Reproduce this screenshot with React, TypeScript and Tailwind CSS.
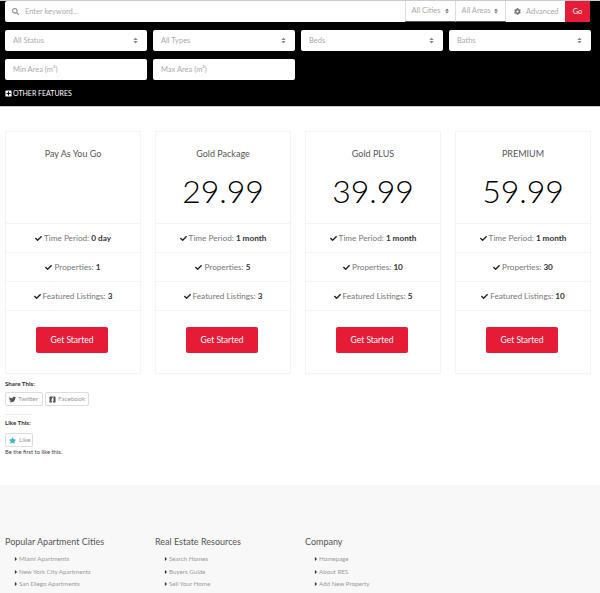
import { FaTwitter, FaFacebookSquare, FaStar, FaCaretRight, FaCheck, FaPlusSquare, FaCog, FaSearch, FaSort } from 'react-icons/fa';

interface Plan {
  name: string;
  price?: string;
  period: string;
  properties: string;
  featured: string;
}

const plans: Plan[] = [
  { name: 'Pay As You Go', period: '0 day', properties: '1', featured: '3' },
  { name: 'Gold Package', price: '29.99', period: '1 month', properties: '5', featured: '3' },
  { name: 'Gold PLUS', price: '39.99', period: '1 month', properties: '10', featured: '5' },
  { name: 'PREMIUM', price: '59.99', period: '1 month', properties: '30', featured: '10' },
];

const footerColumns = [
  { title: 'Popular Apartment Cities', links: ['Miami Apartments', 'New York City Apartments', 'San Diego Apartments'] },
  { title: 'Real Estate Resources', links: ['Search Homes', 'Buyers Guide', 'Sell Your Home'] },
  { title: 'Company', links: ['Homepage', 'About RES', 'Add New Property'] },
];

function SelectBox({ label, arrows = true }: { label: string; arrows?: boolean }) {
  return (
    <div className="flex h-[21px] items-center justify-between rounded-[2px] bg-white px-2 text-[7.5px] text-[#aaa]">
      <span>{label}</span>
      {arrows && <FaSort className="text-[7px] text-[#888]" />}
    </div>
  );
}

function PlanRow({ label, value }: { label: string; value: string }) {
  return (
    <div className="flex h-[29px] items-center justify-center gap-[2px] border-t border-[#f4f4f4] text-[8.2px] text-[#777]">
      <FaCheck className="text-[7px] text-[#222]" />
      <span>
        {label}: <b className="font-bold text-[#333]">{value}</b>
      </span>
    </div>
  );
}

function PlanCard({ plan }: { plan: Plan }) {
  return (
    <div className="flex h-[243px] w-[136px] flex-col border border-[#f4f4f4] bg-white">
      <div className="flex h-[91px] flex-col items-center">
        <div className="mt-[16px] text-[9px] leading-[12px] text-[#555]">{plan.name}</div>
        {plan.price && <div className="mt-[11px] text-[32px] font-light leading-[40px] text-black">{plan.price}</div>}
      </div>
      <PlanRow label="Time Period" value={plan.period} />
      <PlanRow label="Properties" value={plan.properties} />
      <PlanRow label="Featured Listings" value={plan.featured} />
      <div className="flex flex-1 justify-center border-t border-[#f4f4f4] pr-[2px] pt-[16px]">
        <div className="flex h-[26px] w-[72px] items-center justify-center rounded-[2px] bg-[#e61b35] text-[8.5px] text-white">
          Get Started
        </div>
      </div>
    </div>
  );
}

export default function App() {
  return (
    <div className="h-[593px] w-[600px] overflow-hidden bg-white font-['Lato','Open_Sans',sans-serif]">
      {/* Search panel */}
      <div className="h-[107px] border-y border-[#ccc] bg-black px-[5px]">
        <div className="flex h-[21px] w-[585px] items-center rounded-[2px] bg-white pl-[7px] text-[7.5px] text-[#aaa]">
          <FaSearch className="text-[7px] text-[#888]" />
          <span className="ml-[6px] flex-1">Enter keyword...</span>
          <div className="flex h-full w-[51px] items-center justify-center gap-[3px] border-x border-b border-b-[#555] border-x-[#ddd]">
            All Cities <FaSort className="text-[6px] text-[#777]" />
          </div>
          <div className="flex h-full w-[50px] items-center justify-center gap-[3px] border-r border-b border-b-[#555] border-r-[#ddd]">
            All Areas <FaSort className="text-[6px] text-[#777]" />
          </div>
          <div className="flex h-full w-[59px] items-center gap-[5px] pl-[8px]">
            <FaCog className="text-[7px] text-[#777]" /> Advanced
          </div>
          <div className="flex h-full w-[25px] items-center justify-center rounded-r-[2px] bg-[#e61b35] text-white">Go</div>
        </div>
        <div className="mt-[8px] grid w-[586px] grid-cols-4 gap-x-[6px] gap-y-[8px]">
          <SelectBox label="All Status" />
          <SelectBox label="All Types" />
          <SelectBox label="Beds" />
          <SelectBox label="Baths" />
          <SelectBox label="Min Area (m²)" arrows={false} />
          <SelectBox label="Max Area (m²)" arrows={false} />
        </div>
        <div className="mt-[8px] flex items-center gap-px text-[7px] text-white">
          <FaPlusSquare className="text-[7px]" />
          <span>OTHER FEATURES</span>
        </div>
      </div>

      {/* Pricing */}
      <div className="mt-[24px] flex gap-[14px] pl-[5px]">
        {plans.map((plan) => (
          <PlanCard key={plan.name} plan={plan} />
        ))}
      </div>

      {/* Share */}
      <div className="px-[5px] pt-[6px]">
        <div className="text-[6.2px] font-bold leading-[8px] text-[#333]">Share This:</div>
        <div className="mt-[4px] flex gap-[2px]">
          <div className="flex h-[14px] w-[38px] items-center gap-[2px] rounded-[2px] border border-[#ddd] pl-[3px] text-[6.5px] text-[#999]">
            <FaTwitter className="text-[7px] text-[#555]" /> Twitter
          </div>
          <div className="flex h-[14px] w-[44px] items-center gap-[2px] rounded-[2px] border border-[#ddd] pl-[3px] text-[6.5px] text-[#999]">
            <FaFacebookSquare className="text-[7px] text-[#555]" /> Facebook
          </div>
        </div>
        <div className="mt-[8px] h-px w-[27px] bg-[#eee]" />
        <div className="mt-[4px] text-[6.2px] font-bold leading-[8px] text-[#333]">Like This:</div>
        <div className="mt-[6px] flex h-[14px] w-[28px] items-center gap-[3px] rounded-[2px] border border-[#ddd] pl-[3px] text-[6.5px] text-[#999]">
          <FaStar className="text-[7px] text-[#3fb3cf]" /> Like
        </div>
        <div className="mt-[1px] text-[5.8px] leading-[8px] text-[#444]">Be the first to like this.</div>
      </div>

      {/* Footer */}
      <div className="mt-[29px] flex h-[120px] bg-[#f8f8f8] pl-[5px] pt-[51px]">
        {footerColumns.map((col) => (
          <div key={col.title} className="w-[150px]">
            <div className="text-[9px] leading-[12px] text-[#555]">{col.title}</div>
            <div className="mt-[7px] flex flex-col gap-[4.5px] pl-[8px]">
              {col.links.map((link) => (
                <div key={link} className="flex items-center text-[6.2px] leading-[8px] text-[#999]">
                  <FaCaretRight className="text-[6px] text-[#333]" />
                  <span>{link}</span>
                </div>
              ))}
            </div>
          </div>
        ))}
      </div>
    </div>
  );
}
